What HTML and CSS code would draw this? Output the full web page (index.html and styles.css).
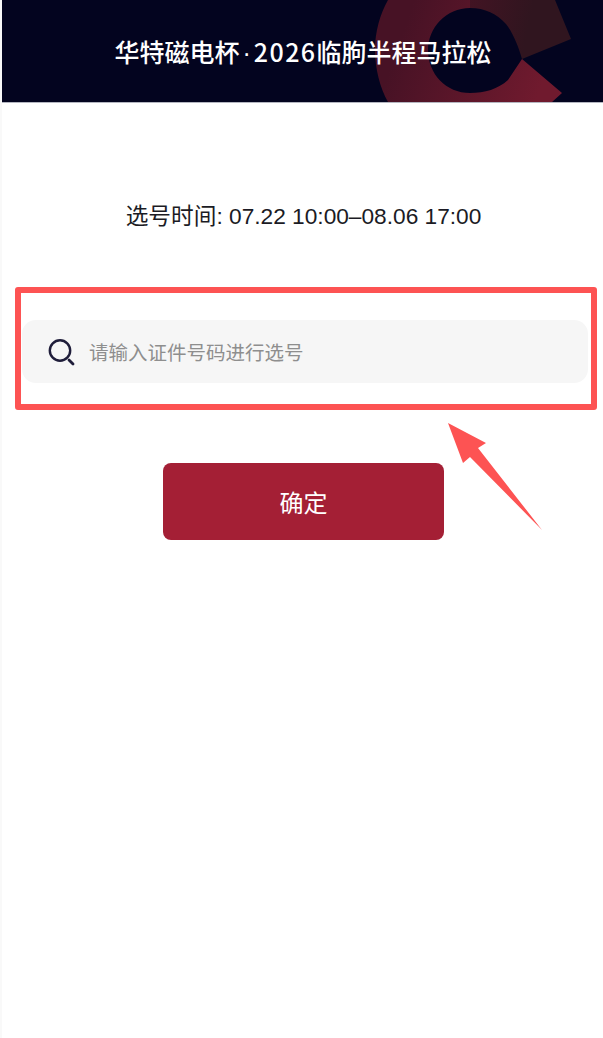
FILE: index.html
```html
<!DOCTYPE html>
<html lang="en">
<head>
    <meta charset="UTF-8">
    <meta name="viewport" content="width=device-width, initial-scale=1.0">
    <title>选号</title>
    <link rel="stylesheet" href="styles.css">
</head>
<body>
    <div class="page">
        <div class="top-bar">
            <svg class="top-art" width="603" height="102" viewBox="0 0 603 102">
                <defs>
                    <linearGradient id="ringLow" gradientUnits="userSpaceOnUse" x1="400" y1="40" x2="540" y2="90">
                        <stop offset="0" stop-color="#471225"></stop>
                        <stop offset="1" stop-color="#701a2e"></stop>
                    </linearGradient>
                    <linearGradient id="ringTop" gradientUnits="userSpaceOnUse" x1="440" y1="0" x2="530" y2="20">
                        <stop offset="0" stop-color="#4a1325"></stop>
                        <stop offset="1" stop-color="#30151f"></stop>
                    </linearGradient>
                </defs>
                <path fill="url(#ringLow)" d="M470 0 L388 0 C380 14 375 32 375 50 C375 68 380 88 388 102 L552 102 L562 93 L522 59 L508 80 C498 89 485 93 470 93 C446 93 428 74 428 50 C428 28 446 8 470 8 Z"></path>
                <path fill="url(#ringTop)" d="M470 0 L555 0 L571 39 L522 59 C518 45 513 33 506 24 C497 14 485 8 470 8 Z"></path>
            </svg>
            <h1>华特磁电杯<span class="dot">·</span><span class="digits">2026</span>临朐半程马拉松</h1>
        </div>

        <p class="time-line">选号时间: 07.22 10:00–08.06 17:00</p>

        <div class="highlight-box">
            <div class="search-bar">
                <svg class="search-icon" width="28" height="28" viewBox="0 0 28 28" fill="none" stroke="#1f1d3a">
                    <circle cx="13" cy="12.5" r="10.2" stroke-width="2.4"></circle>
                    <path d="M22 22 L26 26" stroke-width="2.8" stroke-linecap="round"></path>
                </svg>
                <span class="placeholder">请输入证件号码进行选号</span>
            </div>
        </div>

        <button class="button">确定</button>

        <svg class="arrow" width="603" height="1038" viewBox="0 0 603 1038">
            <polygon fill="#fd5353" points="448,423 486,443 478,448 542,530 470,457 463,463"></polygon>
        </svg>
    </div>
</body>
</html>
```

FILE: styles.css
```css
/* Main Styles */
body {
    margin: 0;
    background-color: #f9f9f9;
    font-family: "Liberation Sans", "Noto Sans CJK SC", sans-serif;
}
.page {
    position: relative;
    margin-left: 2px;
    height: 1038px;
    background-color: #ffffff;
    overflow: hidden;
}
.top-bar {
    position: relative;
    height: 102px;
    background-color: #03041f;
    border-bottom: 1px solid #b4b6c0;
    display: flex;
    justify-content: center;
    align-items: center;
    overflow: hidden;
}
.top-art {
    position: absolute;
    left: -2px;
    top: 0;
}
.top-bar h1 {
    position: relative;
    margin: 0 0 0 1px;
    color: #ffffff;
    font-family: "Noto Sans CJK SC", sans-serif;
    font-size: 25px;
    font-weight: 500;
    white-space: nowrap;
}
.dot {
    font-family: "Liberation Sans", sans-serif;
    padding: 0 3px;
}
.digits {
    letter-spacing: 1.4px;
}
.time-line {
    margin: 100px 0 0 2px;
    height: 26px;
    line-height: 26px;
    text-align: center;
    color: #1b1b24;
    font-size: 22.7px;
}
.highlight-box {
    margin: 58px 6px 0 13px;
    height: 123px;
    box-sizing: border-box;
    border: 6px solid #fd5353;
    border-radius: 3px;
    padding: 27px 3px 0 1px;
}
.search-bar {
    height: 63px;
    background-color: #f6f6f6;
    border-radius: 14px;
    display: flex;
    align-items: center;
    padding-left: 25px;
}
.search-icon {
    margin-right: 14px;
}
.placeholder {
    color: #8e8e8e;
    font-size: 19.5px;
}
.button {
    display: block;
    width: 281px;
    height: 77px;
    margin: 53px 0 0 161px;
    background-color: #a41f35;
    color: #ffffff;
    border: none;
    border-radius: 8px;
    font-family: inherit;
    font-size: 24px;
    cursor: pointer;
}
.arrow {
    position: absolute;
    left: -2px;
    top: 0;
    pointer-events: none;
}
```
